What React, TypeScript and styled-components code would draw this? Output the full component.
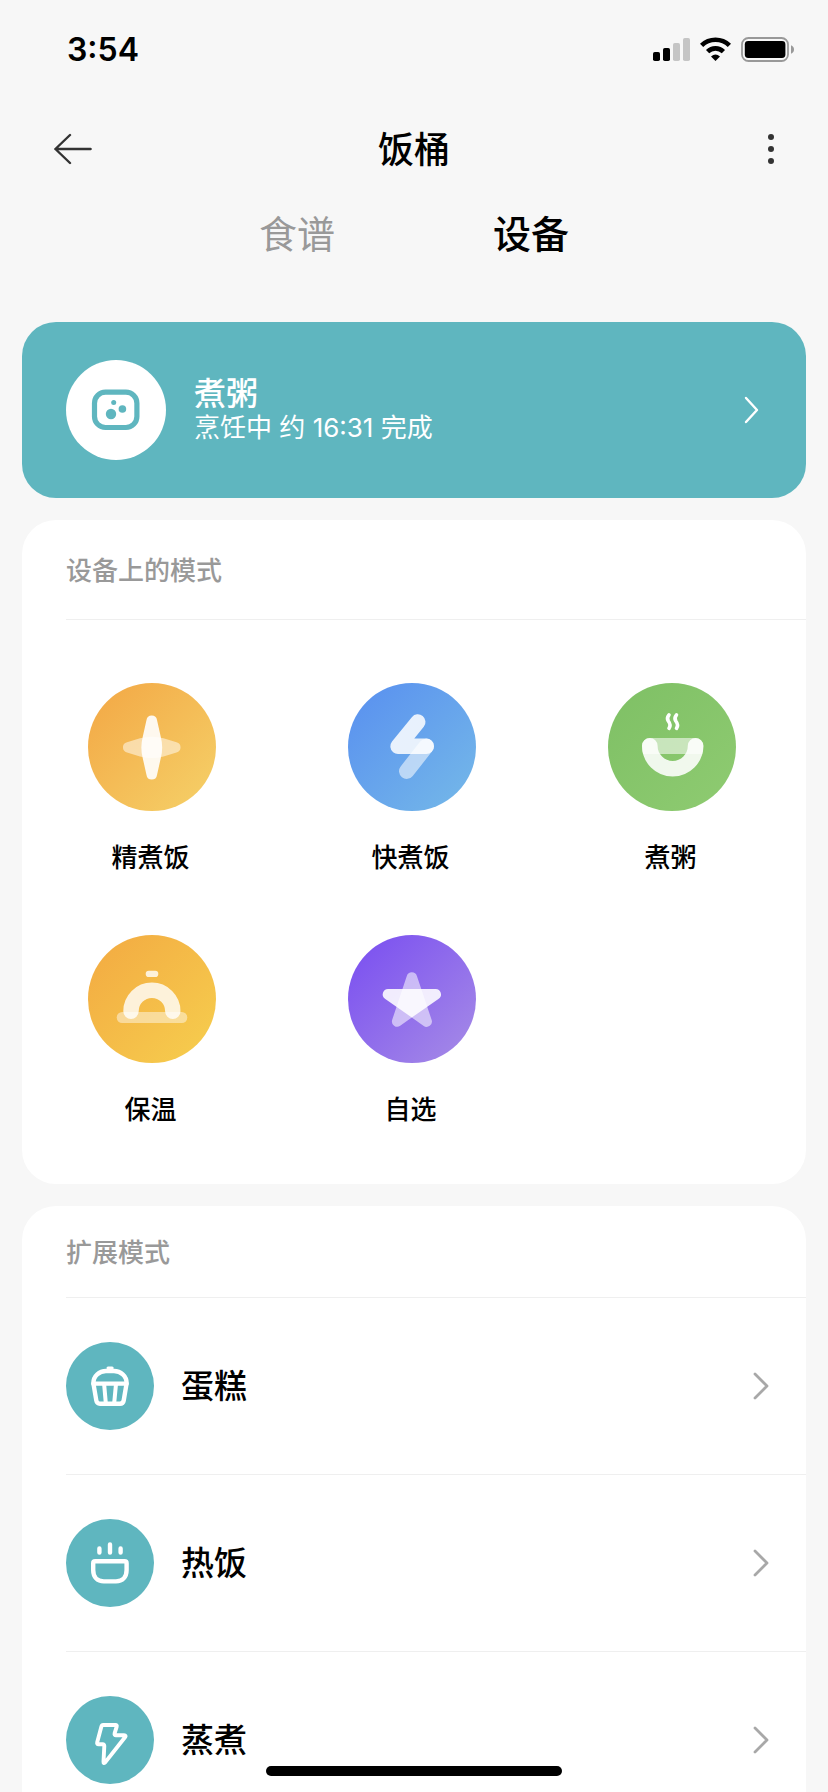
import React from 'react';
import styled, { createGlobalStyle } from 'styled-components';

const TEAL = '#5fb6bf';

const GlobalStyle = createGlobalStyle`
  *, *::before, *::after { box-sizing: border-box; }
  body {
    margin: 0;
    background: #f7f7f7;
    color: #000;
    font-family: Inter, "Noto Sans CJK SC", sans-serif;
  }
  button {
    margin: 0;
    padding: 0;
    border: 0;
    background: none;
    color: inherit;
    font: inherit;
    cursor: pointer;
  }
  svg { display: block; flex: none; }
`;

const Screen = styled.div`
  height: 100vh;
  overflow-y: auto;
  scrollbar-width: none;
  background: #f7f7f7;
`;

const StatusBar = styled.div`
  display: flex;
  align-items: center;
  justify-content: space-between;
  height: 99px;
  padding: 0 34px 0 67px;
`;

const Clock = styled.time`
  font-size: 32px;
  line-height: 40px;
  font-weight: 600;
`;

const StatusIcons = styled.div`
  display: flex;
  align-items: center;
  gap: 10px;
`;

const NavBar = styled.header`
  display: grid;
  grid-template-columns: 60px 1fr 60px;
  align-items: center;
  height: 100px;
  padding: 0 54px;
`;

const NavButton = styled.button<{ $align: 'flex-start' | 'flex-end' }>`
  display: flex;
  align-items: center;
  justify-content: ${(p) => p.$align};
  height: 60px;
`;

const PageTitle = styled.h1`
  margin: 0;
  padding-top: 2px;
  text-align: center;
  font-size: 36px;
  line-height: 52px;
  font-weight: 500;
`;

const Tabs = styled.nav`
  display: flex;
  justify-content: center;
  height: 70px;
`;

const Tab = styled.button<{ $active?: boolean }>`
  width: 234px;
  font-size: 38px;
  line-height: 54px;
  font-weight: ${(p) => (p.$active ? 500 : 400)};
  color: ${(p) => (p.$active ? '#000' : '#999')};
`;

const Content = styled.main`
  display: flex;
  flex-direction: column;
  gap: 22px;
  padding: 53px 22px 40px;
`;

const Banner = styled.button`
  display: flex;
  align-items: center;
  gap: 28px;
  height: 176px;
  padding: 0 47px 0 44px;
  border-radius: 34px;
  background: ${TEAL};
  color: #fff;
  text-align: left;
`;

const BannerText = styled.span`
  display: flex;
  flex: 1;
  flex-direction: column;
`;

const BannerTitle = styled.span`
  font-size: 32px;
  line-height: 36px;
  font-weight: 500;
`;

const BannerStatus = styled.span`
  font-size: 26px;
  line-height: 32px;
  font-weight: 400;
`;

const Card = styled.section`
  border-radius: 34px;
  background: #fff;
`;

const CardHeading = styled.h2<{ $height: number }>`
  display: flex;
  align-items: center;
  height: ${(p) => p.$height}px;
  margin: 0 0 0 44px;
  padding-bottom: 2px;
  border-bottom: 1px solid #efefef;
  color: #999;
  font-size: 26px;
  font-weight: 500;
`;

const ModeGrid = styled.div`
  display: grid;
  grid-template-columns: repeat(3, 1fr);
  row-gap: 57px;
  padding: 63px 4px 54px 0;
`;

const ModeButton = styled.button`
  display: flex;
  flex-direction: column;
  align-items: center;
  gap: 27px;
`;

const ModeDisc = styled.span<{ $from: string; $to: string }>`
  width: 128px;
  height: 128px;
  border-radius: 50%;
  background: linear-gradient(135deg, ${(p) => p.$from} 10%, ${(p) => p.$to} 90%);
`;

const ModeLabel = styled.span`
  padding-right: 3px;
  font-size: 26px;
  line-height: 40px;
  font-weight: 500;
`;

const ModeList = styled.ul`
  margin: 0;
  padding: 0 0 0 44px;
  list-style: none;
`;

const ModeItem = styled.li`
  height: 177px;
  border-bottom: 1px solid #efefef;
  &:last-child { border-bottom-color: transparent; }
`;

const RowButton = styled.button`
  display: flex;
  align-items: center;
  gap: 27px;
  width: 100%;
  height: 100%;
  padding-right: 37px;
  text-align: left;
`;

const Disc = styled.span<{ $size: number; $color: string }>`
  flex: none;
  width: ${(p) => p.$size}px;
  height: ${(p) => p.$size}px;
  border-radius: 50%;
  background: ${(p) => p.$color};
`;

const RowLabel = styled.span`
  flex: 1;
  font-size: 33px;
  line-height: 48px;
  font-weight: 500;
`;

const HomeIndicator = styled.div`
  position: fixed;
  bottom: 16px;
  left: 50%;
  width: 296px;
  height: 10px;
  margin-left: -148px;
  border-radius: 5px;
  background: #000;
`;

const SignalIcon = () => (
  <svg width="37" height="25" viewBox="0 0 37 25">
    <rect x="0" y="15" width="7" height="9" rx="1.8" />
    <rect x="10" y="11" width="7" height="13" rx="1.8" />
    <rect x="20" y="6" width="7" height="18" rx="1.8" fill="#c5c5c5" />
    <rect x="30" y="1" width="7" height="23" rx="1.8" fill="#c5c5c5" />
  </svg>
);

const WifiIcon = () => (
  <svg width="31" height="25" viewBox="0 0 31 25" fill="none" stroke="#000" strokeWidth="4.6">
    <path d="M1.6 8.4A19.8 19.8 0 0 1 29.4 8.4" />
    <path d="M7.6 14.6A11.2 11.2 0 0 1 23.4 14.6" />
    <path d="M15.5 24L11 19.4Q15.5 15.4 20 19.4Z" fill="#000" stroke="none" />
  </svg>
);

const BatteryIcon = () => (
  <svg width="53" height="25" viewBox="0 0 53 25">
    <rect x="1" y="1" width="46" height="23" rx="6.5" fill="none" stroke="#999" strokeWidth="1.8" />
    <rect x="3.8" y="4" width="40.6" height="17" rx="3.4" />
    <path d="M50 8.3Q53 9.5 53 12.5T50 16.7Z" fill="#999" />
  </svg>
);

const BackIcon = () => (
  <svg width="38" height="32" viewBox="1 0 38 32" fill="none" stroke="#333" strokeWidth="2.4" strokeLinecap="round" strokeLinejoin="round">
    <path d="M17 2L2.4 16L17 30M2.4 16H37.6" />
  </svg>
);

const MoreIcon = () => (
  <svg width="6" height="30" viewBox="0 0 6 30" fill="#333">
    <circle cx="3" cy="3" r="3" />
    <circle cx="3" cy="15" r="3" />
    <circle cx="3" cy="27" r="3" />
  </svg>
);

const Chevron = ({ color, width, weight }: { color: string; width: number; weight: number }) => (
  <svg width={width} height="28" viewBox={`0 0 ${width} 28`} fill="none" stroke={color} strokeWidth={weight} strokeLinecap="round" strokeLinejoin="round">
    <path d={`M2 2L${width - 2} 14L2 26`} />
  </svg>
);

const CookerIcon = () => (
  <svg width="100" height="100" viewBox="0 0 100 100" fill={TEAL}>
    <rect x="28.5" y="32.2" width="42.4" height="35.3" rx="11" fill="none" stroke={TEAL} strokeWidth="5.2" />
    <circle cx="45" cy="54" r="5.2" />
    <circle cx="56.4" cy="49" r="3.8" />
    <circle cx="47.7" cy="42.5" r="2.5" />
  </svg>
);

const SparkIcon = () => (
  <svg viewBox="0 0 128 128" fill="#fff">
    <path opacity=".5" d="M39 59.2L52 55.3Q64 52 75.5 55.3L88.5 59.2A5.3 5.3 0 0 1 88.5 69.5L75.5 73.4Q64 76.6 52 73.4L39 69.5A5.3 5.3 0 0 1 39 59.2Z" />
    <path opacity=".9" d="M58.5 37A5.3 5.3 0 0 1 69 37L72.8 54Q75.6 64.5 72.8 75L69 92A5.3 5.3 0 0 1 58.5 92L54.7 75Q52 64.5 54.7 54Z" />
  </svg>
);

const FlashIcon = () => (
  <svg viewBox="0 0 128 128" fill="none" stroke="#fff" strokeWidth="15.4" strokeLinecap="round" strokeLinejoin="round">
    <path opacity=".55" d="M78.3 63.3L58.7 88.2" />
    <path opacity=".85" d="M69.8 39L50 63.3H78.3" />
  </svg>
);

const PorridgeIcon = () => (
  <svg viewBox="0 0 128 128" fill="none" stroke="#fff" strokeLinecap="round">
    <path opacity=".55" fill="#fff" stroke="none" d="M42 55H87.5A8 8 0 0 1 95.3 63Q95.3 67 94.3 71H35Q34 67 34 63A8 8 0 0 1 42 55Z" />
    <path opacity=".88" strokeWidth="15.6" d="M41.8 62.8A22.9 22.9 0 0 0 87.6 62.8" />
    <path strokeWidth="3.6" d="M61 31.8Q58.4 35 60.3 38Q63.4 42 61 45.4M68.5 31.8Q65.9 35 67.8 38Q70.9 42 68.5 45.4" />
  </svg>
);

const WarmIcon = () => (
  <svg viewBox="0 0 128 128" fill="#fff">
    <rect opacity=".45" x="28.7" y="77" width="70.6" height="11" rx="5.5" />
    <rect opacity=".8" x="57.7" y="35.8" width="12.6" height="6.2" rx="3.1" />
    <path opacity=".8" fill="none" stroke="#fff" strokeWidth="15.4" strokeLinecap="round" d="M43 76.2A20.9 20.9 0 0 1 84.8 76.2" />
  </svg>
);

const StarIcon = () => (
  <svg viewBox="0 0 128 128" fill="#fff">
    <path opacity=".55" d="M58.8 41A5.3 5.3 0 0 1 68.9 41L83.6 84.8A5.3 5.3 0 0 1 75.4 90.8L63.8 82.4L52.2 90.8A5.3 5.3 0 0 1 44.2 84.8Z" />
    <path opacity=".88" d="M40.3 54H87.3A5.4 5.4 0 0 1 90.4 64L63.8 82.4L37.3 64A5.4 5.4 0 0 1 40.3 54Z" />
  </svg>
);

const CakeIcon = () => (
  <svg viewBox="0 0 88 88" fill="none" stroke="#fff" strokeWidth="4.4" strokeLinecap="round" strokeLinejoin="round">
    <path d="M27.3 41.6C27.3 33.5 33.5 29 40 29H48C54.5 29 60.7 33.5 60.7 41.6Z" />
    <path d="M27.5 42L30.3 58.5Q30.9 61.8 34 61.8H54Q57.1 61.8 57.7 58.5L60.5 42" />
    <path strokeWidth="4" d="M38.2 43L39.8 61M49.9 43L48.2 61" />
    <path strokeWidth="3" d="M42 26H46.2" />
  </svg>
);

const HotRiceIcon = () => (
  <svg viewBox="0 0 88 88" fill="none" stroke="#fff" strokeWidth="4.4" strokeLinecap="round" strokeLinejoin="round">
    <path d="M29.2 42.2H58.6Q60.6 42.2 60.6 44.2V51C60.6 58 56.5 62.4 50 62.4H37.8C31.3 62.4 27.2 58 27.2 51V44.2Q27.2 42.2 29.2 42.2Z" />
    <path d="M33.4 29.5V33.6M44 25.4V33.6M54.6 29.5V33.6" />
  </svg>
);

const SteamIcon = () => (
  <svg viewBox="0 0 88 88" fill="none" stroke="#fff" strokeWidth="3.9" strokeLinecap="round" strokeLinejoin="round">
    <path d="M37.2 29H49.5Q51.2 29 50.7 30.6L48.6 37.4Q48.2 39.3 50 39.3H58Q60.6 39.3 59 41.3L39 66.6Q37.4 68 37.5 65.8L38.3 50.2Q38.4 48.2 36.6 48.2H32.6Q30.7 48.2 31.2 46.3L35.4 30.6Q35.8 29 37.2 29Z" />
  </svg>
);

const deviceModes = [
  { name: '精煮饭', from: '#f3ab48', to: '#f5cd65', Icon: SparkIcon },
  { name: '快煮饭', from: '#5b93ef', to: '#72b5e9', Icon: FlashIcon },
  { name: '煮粥', from: '#80c166', to: '#8dca70', Icon: PorridgeIcon },
  { name: '保温', from: '#f3ad43', to: '#f6cb4d', Icon: WarmIcon },
  { name: '自选', from: '#7d53f0', to: '#a286e7', Icon: StarIcon },
];

const extendedModes = [
  { name: '蛋糕', Icon: CakeIcon },
  { name: '热饭', Icon: HotRiceIcon },
  { name: '蒸煮', Icon: SteamIcon },
];

export default function App() {
  return (
    <>
      <GlobalStyle />
      <Screen>
        <StatusBar>
          <Clock>3:54</Clock>
          <StatusIcons>
            <SignalIcon />
            <WifiIcon />
            <BatteryIcon />
          </StatusIcons>
        </StatusBar>
        <NavBar>
          <NavButton $align="flex-start" aria-label="返回"><BackIcon /></NavButton>
          <PageTitle>饭桶</PageTitle>
          <NavButton $align="flex-end" aria-label="更多"><MoreIcon /></NavButton>
        </NavBar>
        <Tabs>
          <Tab>食谱</Tab>
          <Tab $active aria-current="page">设备</Tab>
        </Tabs>
        <Content>
          <Banner>
            <Disc $size={100} $color="#fff"><CookerIcon /></Disc>
            <BannerText>
              <BannerTitle>煮粥</BannerTitle>
              <BannerStatus>烹饪中 约 16:31 完成</BannerStatus>
            </BannerText>
            <Chevron color="#fff" width={15} weight={2.4} />
          </Banner>
          <Card>
            <CardHeading $height={100}>设备上的模式</CardHeading>
            <ModeGrid>
              {deviceModes.map(({ name, from, to, Icon }) => (
                <ModeButton key={name}>
                  <ModeDisc $from={from} $to={to}><Icon /></ModeDisc>
                  <ModeLabel>{name}</ModeLabel>
                </ModeButton>
              ))}
            </ModeGrid>
          </Card>
          <Card>
            <CardHeading $height={92}>扩展模式</CardHeading>
            <ModeList>
              {extendedModes.map(({ name, Icon }) => (
                <ModeItem key={name}>
                  <RowButton>
                    <Disc $size={88} $color={TEAL}><Icon /></Disc>
                    <RowLabel>{name}</RowLabel>
                    <Chevron color="#a8a8a8" width={16} weight={2.8} />
                  </RowButton>
                </ModeItem>
              ))}
            </ModeList>
          </Card>
        </Content>
      </Screen>
      <HomeIndicator />
    </>
  );
}
